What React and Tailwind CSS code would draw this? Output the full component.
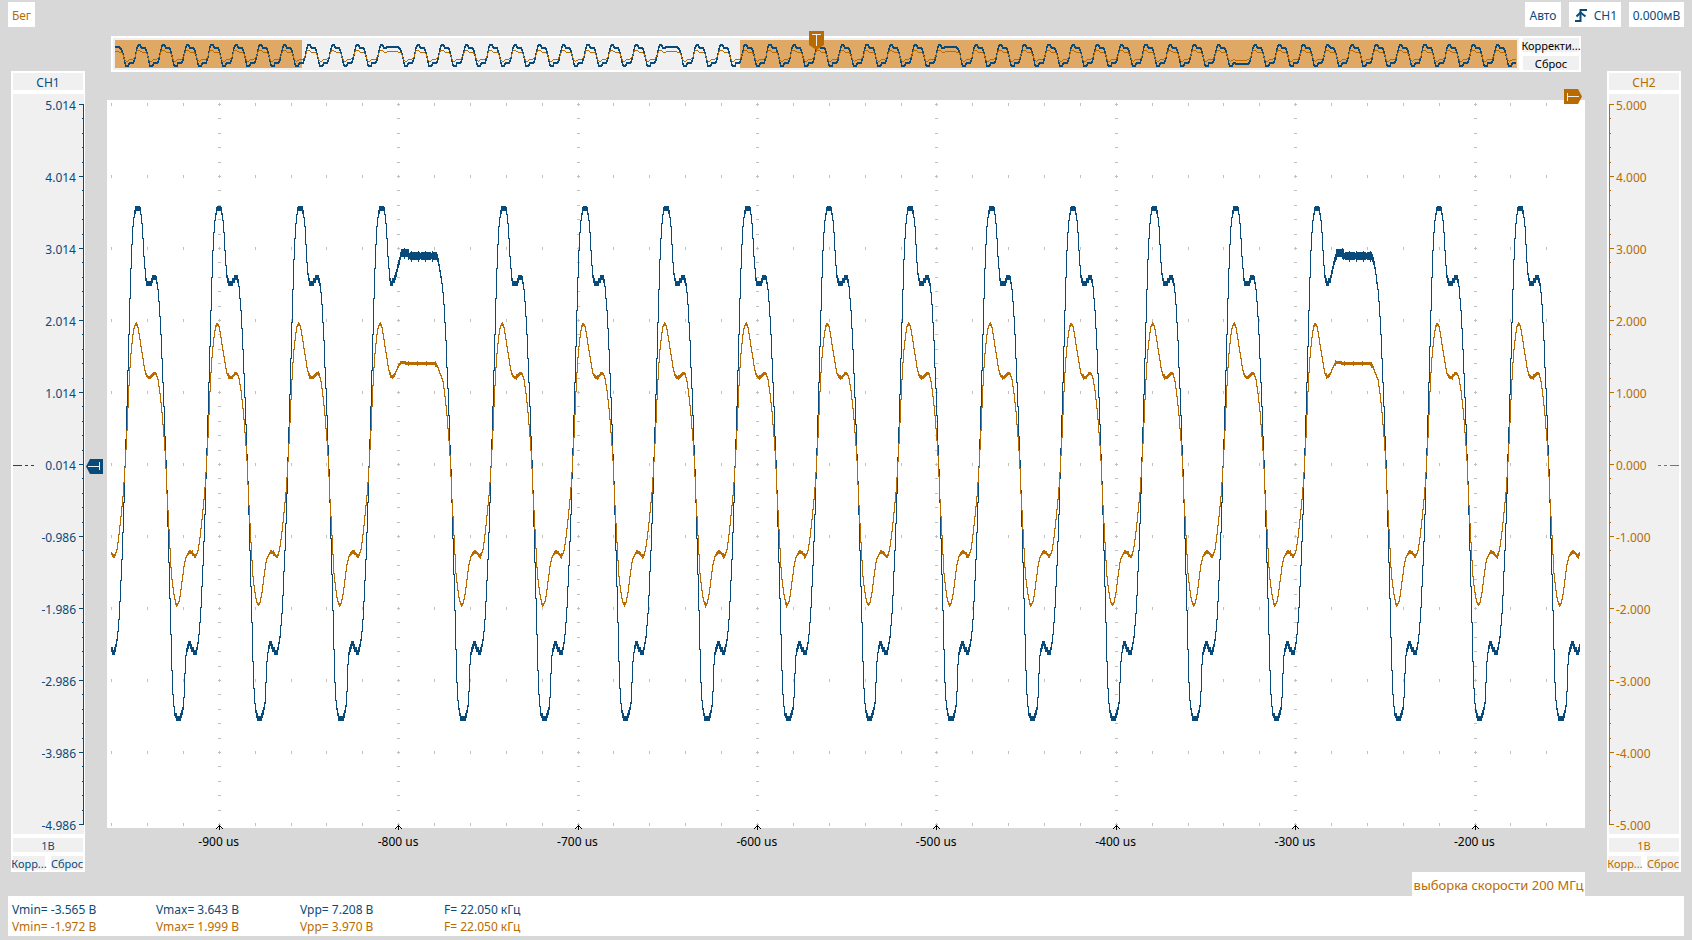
import React from 'react';

const BLUE = '#084b7b';
const ORANGE = '#b96b00';

// One period of each channel as [x, y] pairs; 244 x units per period, three units per pixel, y = 820 is zero volts.
const PERIOD = 244;
const ZERO = 820;

const BLUE_CYCLE = [
  [60, 820], [63, 740], [66, 640], [69, 540], [72, 430], [75, 320], [78, 230], [81, 155], [84, 105], [88, 75],
  [91, 57], [98, 55], [105, 57], [108, 75], [112, 105], [115, 165], [118, 215], [122, 262], [126, 276], [132, 278],
  [138, 276], [141, 267], [145, 264], [147, 258], [151, 258], [154, 268], [157, 282], [160, 310], [163, 345],
  [166, 395], [169, 450], [172, 530], [175, 600], [178, 680], [181, 765], [184, 840], [187, 935], [190, 1050],
  [193, 1155], [196, 1260], [199, 1380], [202, 1475], [205, 1535], [209, 1568], [214, 1580], [220, 1585],
  [226, 1580], [231, 1567], [235, 1550], [238, 1500], [241, 1420], [244, 1385], [248, 1370], [251, 1359],
  [255, 1359], [258, 1370], [264, 1380], [270, 1386], [275, 1378], [279, 1355], [283, 1320], [287, 1270],
  [290, 1210], [293, 1140], [296, 1080], [299, 1000], [302, 905], [304, 820],
];

const ORANGE_CYCLE = [
  [60, 830], [65, 740], [68, 670], [71, 600], [74, 545], [77, 500], [80, 465], [84, 430], [88, 407], [94, 398],
  [99, 410], [104, 440], [109, 475], [114, 505], [118, 530], [123, 552], [129, 560], [135, 562], [141, 555],
  [148, 547], [154, 550], [159, 568], [164, 600], [168, 635], [172, 675], [175, 715], [178, 750], [182, 810],
  [186, 910], [190, 980], [195, 1075], [199, 1150], [203, 1185], [208, 1220], [213, 1241], [217, 1244],
  [222, 1232], [227, 1205], [232, 1165], [238, 1120], [243, 1100], [249, 1088], [255, 1083], [262, 1087],
  [270, 1098], [275, 1093], [280, 1075], [285, 1040], [290, 995], [295, 945], [299, 905], [304, 830],
];

const HALF = PERIOD / 2;

function stretch(cycle, plateau) {
  const head = cycle.filter((p) => p[0] <= 130);
  const tail = cycle.filter((p) => p[0] >= 157).map((p) => [p[0] + HALF, p[1]]);
  return [...head, ...plateau, ...tail];
}

const BLUE_LONG = stretch(BLUE_CYCLE, [
  [136, 272], [141, 253], [148, 222], [153, 205], [157, 188], [176, 188], [178, 193], [261, 193], [267, 207], [272, 235],
]);
const ORANGE_LONG = stretch(ORANGE_CYCLE, [
  [138, 550], [146, 530], [153, 518], [157, 514], [168, 514], [171, 518], [256, 518], [264, 524], [272, 545],
]);

function stretchLow(cycle, plateau) {
  const head = cycle.filter((p) => p[0] < 240);
  const tail = cycle.filter((p) => p[0] >= 279).map((p) => [p[0] + HALF, p[1]]);
  return [...head, ...plateau, ...tail];
}

const BLUE_LOW = stretchLow(BLUE_CYCLE, [[244, 1400], [258, 1370], [275, 1440], [385, 1440]]);
const ORANGE_LOW = stretchLow(ORANGE_CYCLE, [[248, 1085], [262, 1110], [275, 1122], [385, 1120]]);

// kinds: n = normal period, t = long top, b = long bottom
function chain(shapes, kinds, firstPeak, unit) {
  const out = [];
  let x0 = firstPeak;
  for (const kind of kinds) {
    for (const [x, y] of shapes[kind]) out.push([x0 + (x - 98) * unit, y]);
    x0 += (kind === 'n' ? PERIOD : PERIOD + HALF) * unit;
  }
  return out;
}

function sampler(points) {
  let i = 0;
  return (x) => {
    while (i > 0 && points[i][0] > x) i--;
    while (i < points.length - 2 && points[i + 1][0] < x) i++;
    const [ax, ay] = points[i];
    const [bx, by] = points[i + 1];
    return bx === ax ? by : ay + ((by - ay) * (x - ax)) / (bx - ax);
  };
}

function columns(points, from, to, toY, thickness, step = 1) {
  const at = sampler(points);
  const level = (v) => Math.round(v / step) * step;
  let d = '';
  for (let x = from; x < to; x++) {
    const a = level(toY(at(x)));
    const b = level(toY(at(x + 1)));
    const t = thickness(Math.abs(b - a), at(x + 0.5), x);
    const top = Math.round(Math.min(a, b) - t / 2);
    const bottom = Math.max(top + 1, Math.round(Math.max(a, b) + t / 2));
    d += `M${x} ${top}h1v${bottom - top}h-1z`;
  }
  return d;
}

const MAIN = 'nnnntnnnnnnnnnntnnn'.split('');

// The long periods are eleven apart; the last one in the overview is stretched at the bottom.
const OVERVIEW = 'tnnnnnnnnnntnnnnnnnnnntnnnnnnnnnntnnnnnnnnnntnnnnnnnnnnbnnnnnnnnnnnn'.split('');

const blueShapes = { n: BLUE_CYCLE, t: BLUE_LONG, b: BLUE_LOW };
const orangeShapes = { n: ORANGE_CYCLE, t: ORANGE_LONG, b: ORANGE_LOW };

const mainY = (y) => (y - ZERO) / 3 + 363.5;
const mainFirst = 30.7 - PERIOD / 3;
const bluePath = columns(
  chain(blueShapes, MAIN, mainFirst, 1 / 3), 4, 1473, mainY,
  (slope, y, x) => {
    if (y > 186 && y < 198 && slope < 4) return x % 7 === 3 ? 11 : x % 11 === 5 ? 6 : 8;
    return slope < 5 ? 5 : slope < 9 ? 2 : 1;
  },
  3
);
const orangePath = columns(chain(orangeShapes, MAIN, mainFirst, 1 / 3), 4, 1473, mainY, (slope, y, x) =>
  slope < 2 ? (x % 9 === 4 ? 5 : 3) : 1
);

const overUnit = 24.26 / PERIOD;
const overY = (y) => ((y - ZERO) / 3) * 0.041 + 17.6;
const overFirst = 102.8 - 279 - 113;
const overBlue = columns(chain(blueShapes, OVERVIEW, overFirst, overUnit), 2, 1403, overY, () => 1.4);
const overOrange = columns(chain(orangeShapes, OVERVIEW, overFirst, overUnit), 2, 1403, overY, () => 0.8);

function gridPath() {
  let d = '';
  for (let i = -3; i <= 37; i++) {
    const x = Math.floor(112.3 + i * 35.88);
    for (let j = 0; j <= 10; j++) d += `M${x} ${3 + j * 72}h1v3h-1z`;
  }
  for (let i = 0; i < 8; i++) {
    const x = Math.floor(112.3 + i * 179.4);
    for (let j = 0; j <= 50; j++) d += `M${x - 1} ${4 + Math.round(j * 14.4)}h3v1h-3z`;
  }
  return d;
}

const GRID = gridPath();
const TIMES = ['-900 us', '-800 us', '-700 us', '-600 us', '-500 us', '-400 us', '-300 us', '-200 us'];

function axisPath() {
  let d = 'M0 10h1v721h-1z';
  for (let j = 0; j <= 50; j++) {
    d += `M0 ${10 + Math.round(j * 14.4)}h${j % 5 === 0 ? 5 : 2}v1h-${j % 5 === 0 ? 5 : 2}z`;
  }
  return d;
}
const AXIS = axisPath();

const CH1_LABELS = ['5.014', '4.014', '3.014', '2.014', '1.014', '0.014', '-0.986', '-1.986', '-2.986', '-3.986', '-4.986'];
const CH2_LABELS = ['5.000', '4.000', '3.000', '2.000', '1.000', '0.000', '-1.000', '-2.000', '-3.000', '-4.000', '-5.000'];

function ChannelPanel({ name, labels, color, right }) {
  return (
    <aside className={`mt-[35px] mb-6 flex w-[74px] shrink-0 flex-col gap-1 bg-white p-0.5 ${color}`}>
      <button className="h-[17px] bg-[#f0f0f0] text-center leading-[19px]">{name}</button>
      <div className={`flex flex-1 bg-[#f0f0f0] ${right ? 'flex-row-reverse' : '-mr-px'}`}>
        <div className="flex flex-1 flex-col justify-between">
          {labels.map((label, i) => (
            <div key={label} className={`flex h-5 items-center justify-between pt-[3px] ${right ? 'flex-row-reverse pl-0.5' : 'pr-[3px]'}`}>
              {i === 5 ? (
                <svg width="22" height="3" viewBox="0 0 22 3" fill="currentColor" className={right ? '-scale-x-100' : ''} shapeRendering="crispEdges">
                  <path d="M0 1h9v1h-9zM12 1h3v1h-3zM18 1h3v1h-3z" />
                </svg>
              ) : (
                <span />
              )}
              <span>{label}</span>
            </div>
          ))}
        </div>
        <svg viewBox="0 0 5 740" preserveAspectRatio="none" className={`h-full w-[5px] ${right ? '' : '-scale-x-100'}`} fill="currentColor" shapeRendering="crispEdges">
          <path d={AXIS} />
        </svg>
      </div>
      <button className="h-3.5 bg-[#f0f0f0] text-center text-[11px] leading-[16px]">1В</button>
      <div className="flex h-3.5 justify-between text-[11px] leading-[16px]">
        <button className="flex w-8 justify-center overflow-visible bg-[#f0f0f0] whitespace-nowrap">Корр...</button>
        <button className="flex w-8 justify-center overflow-visible bg-[#f0f0f0] whitespace-nowrap">Сброс</button>
      </div>
    </aside>
  );
}

function Measurements({ color, values }) {
  return (
    <div className={`flex h-[17px] items-center ${color}`}>
      {values.map((v) => (
        <span key={v} className="w-36 whitespace-nowrap">{v}</span>
      ))}
    </div>
  );
}

export default function App() {
  return (
    <div className="flex min-h-screen flex-col bg-[#d8d8d8] font-['Noto_Sans','Open_Sans',sans-serif] text-[12px]">
      <header className="flex h-9 items-start justify-between px-2 pt-0.5">
        <button className="h-[25px] w-[27px] bg-white pt-0.5 text-[#b96b00]">Бег</button>
        <div className="flex gap-2 text-[#084b7b]">
          <button className="h-[25px] w-9 bg-white pt-0.5">Авто</button>
          <button className="flex h-[25px] w-[52px] items-center justify-between bg-white pt-0.5 pr-1 pl-1.5">
            <svg width="14" height="15" viewBox="0 0 14 15" fill="none" stroke="currentColor" strokeWidth="2">
              <path d="M0 13H5.5V2H12" />
              <path d="M1.5 8.5L5.5 4.5L10.5 8.5" />
            </svg>
            <span>CH1</span>
          </button>
          <button className="h-[25px] w-[55px] bg-white pt-0.5">0.000мВ</button>
        </div>
      </header>

      <div className="flex flex-1 pr-[11px] pl-[11px]">
        <ChannelPanel name="CH1" labels={CH1_LABELS} color="text-[#084b7b]" />

        <main className="relative flex min-w-0 flex-1 flex-col px-[22px]">
          <section className="relative mr-1 ml-1 flex h-9 gap-1 bg-white p-0.5">
            <div className="relative flex-1 bg-[#f0f0f0]">
              <svg viewBox="0 0 1406 32" preserveAspectRatio="none" className="block h-8 w-full" shapeRendering="crispEdges">
                <rect x="2" y="2" width="187" height="28" fill="#dfa965" />
                <rect x="627" y="2" width="777" height="28" fill="#dfa965" />
                <path d={overBlue} fill={BLUE} />
                <path d={overOrange} fill={ORANGE} />
              </svg>
              <svg width="15" height="19" viewBox="0 0 15 19" className="absolute top-[-7px] left-[49.5%]">
                <path d="M0 0H15V14L7.5 19L0 14Z" fill={ORANGE} />
                <path d="M3 3.5H12M7.5 3.5V15" stroke="#f0f0f0" fill="none" />
              </svg>
            </div>
            <div className="flex w-14 flex-col justify-between text-[11px] leading-[16px] text-black">
              <button className="flex h-3.5 justify-center bg-[#f0f0f0] whitespace-nowrap">Корректи...</button>
              <button className="flex h-3.5 justify-center bg-[#f0f0f0] whitespace-nowrap">Сброс</button>
            </div>
          </section>

          <section className="relative mt-7 flex-1 bg-white">
            <svg viewBox="0 0 1478 728" preserveAspectRatio="none" className="absolute inset-0 h-full w-full overflow-visible" shapeRendering="crispEdges">
              <path d={GRID} fill="#c0c0c0" />
              <path d={bluePath} fill={BLUE} />
              <path d={orangePath} fill={ORANGE} />
              {TIMES.map((t, i) => (
                <path
                  key={t}
                  transform={`translate(${Math.floor(112.3 + i * 179.4)} 725)`}
                  d="M0 0h1v5h-1zM-1 1h3v1h-3zM-2 2h1v1h-1zM2 2h1v1h-1zM-3 3h1v1h-1zM3 3h1v1h-1z"
                  fill="#000"
                />
              ))}
            </svg>
            <svg width="18" height="15" viewBox="0 0 18 15" className="absolute top-[-11px] right-[3px]">
              <path d="M0 0H14L18 7.5L14 15H0Z" fill={ORANGE} />
              <path d="M3.5 4V12M3.5 7.5H15" stroke="#f0f0f0" fill="none" />
            </svg>
            <svg width="17" height="15" viewBox="0 0 17 15" className="absolute top-[49.3%] left-[-21px]">
              <path d="M17 0H4L0 7.5L4 15H17Z" fill={BLUE} />
              <path d="M13.5 3V11M2 7.5H13.5" stroke="#f0f0f0" fill="none" />
            </svg>
          </section>

          <div className="grid h-11 grid-cols-8 pt-[5px] pr-[21px] pl-[22px] text-center text-black">
            {TIMES.map((t) => (
              <span key={t}>{t}</span>
            ))}
          </div>

          <div className="flex h-6 w-[173px] items-center justify-center self-end bg-white pt-[3px] text-[13px] whitespace-nowrap text-[#b96b00]">
            выборка скорости 200 МГц
          </div>
        </main>

        <ChannelPanel name="CH2" labels={CH2_LABELS} color="text-[#b96b00]" right />
      </div>

      <footer className="mx-2 mb-1 h-10 bg-white px-1 pt-[5px]">
        <Measurements color="text-[#084b7b]" values={['Vmin= -3.565 В', 'Vmax= 3.643 В', 'Vpp= 7.208 В', 'F= 22.050 кГц']} />
        <Measurements color="text-[#b96b00]" values={['Vmin= -1.972 В', 'Vmax= 1.999 В', 'Vpp= 3.970 В', 'F= 22.050 кГц']} />
      </footer>
    </div>
  );
}
